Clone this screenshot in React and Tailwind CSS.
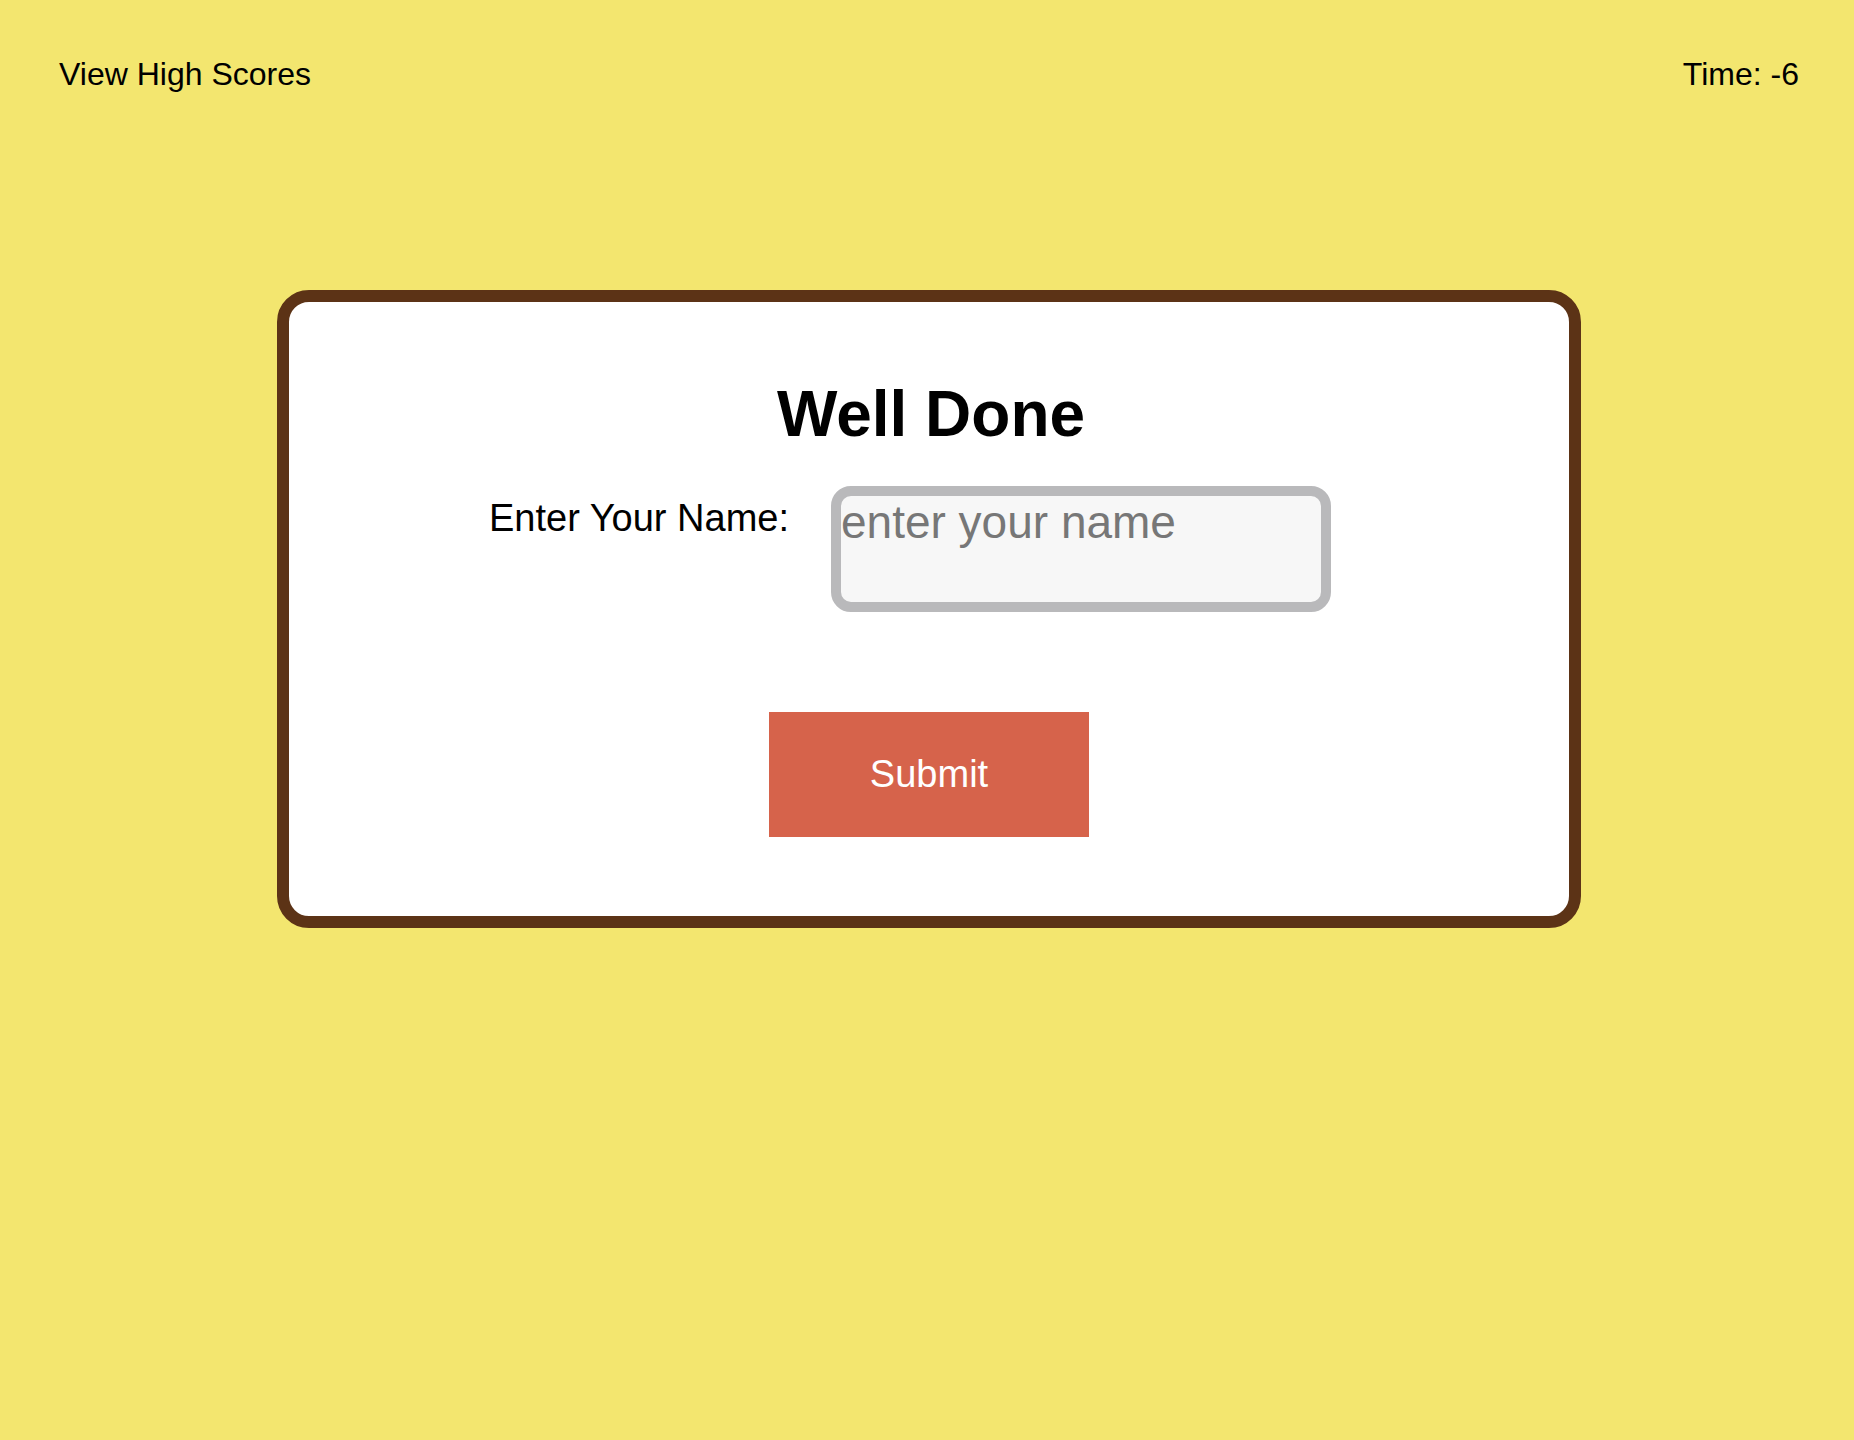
import { useState } from "react";

const font = { fontFamily: '"Liberation Sans", Arial, Helvetica, sans-serif' };

const App = () => {
  const [name, setName] = useState("");
  const [timeLeft] = useState(-6);

  return (
    <div style={font} className="min-h-[1440px] w-full bg-[#f3e66f] text-black">
      {/* Header */}
      <header className="flex items-start justify-between pl-[59px] pr-[55px] pt-[56px]">
        <a href="#" className="text-[32px] leading-[37px] text-black">View High Scores</a>
        <p className="text-[32px] leading-[37px]">Time: {timeLeft}</p>
      </header>

      {/* Result card */}
      <main className="mt-[197px] flex justify-center">
        <section className="ml-[4px] w-[1304px] rounded-[32px] border-[12px] border-[#5c3316] bg-white pt-[75px] pb-[79px] flex flex-col items-center">
          <h1 className="text-[64px] leading-[74px] font-bold pl-[4px]">Well Done</h1>

          <div className="mt-[35px] flex items-start justify-center pr-[38px]">
            <label htmlFor="initials" className="mt-[10px] text-[38px] leading-[44px]">Enter Your Name:</label>
            <textarea
              id="initials"
              value={name}
              onChange={(e) => setName(e.target.value)}
              placeholder="enter your name"
              className="ml-[42px] h-[126px] w-[500px] resize-none rounded-[20px] border-[10px] border-[#b9b9bb] bg-[#f7f7f7] p-0 text-[46px] leading-[52px] text-[#333] placeholder:text-[#777] outline-none"
            />
          </div>

          <button className="mt-[100px] h-[125px] w-[320px] bg-[#d6634b] text-[38px] text-white">
            Submit
          </button>
        </section>
      </main>
    </div>
  );
};

export default App;
